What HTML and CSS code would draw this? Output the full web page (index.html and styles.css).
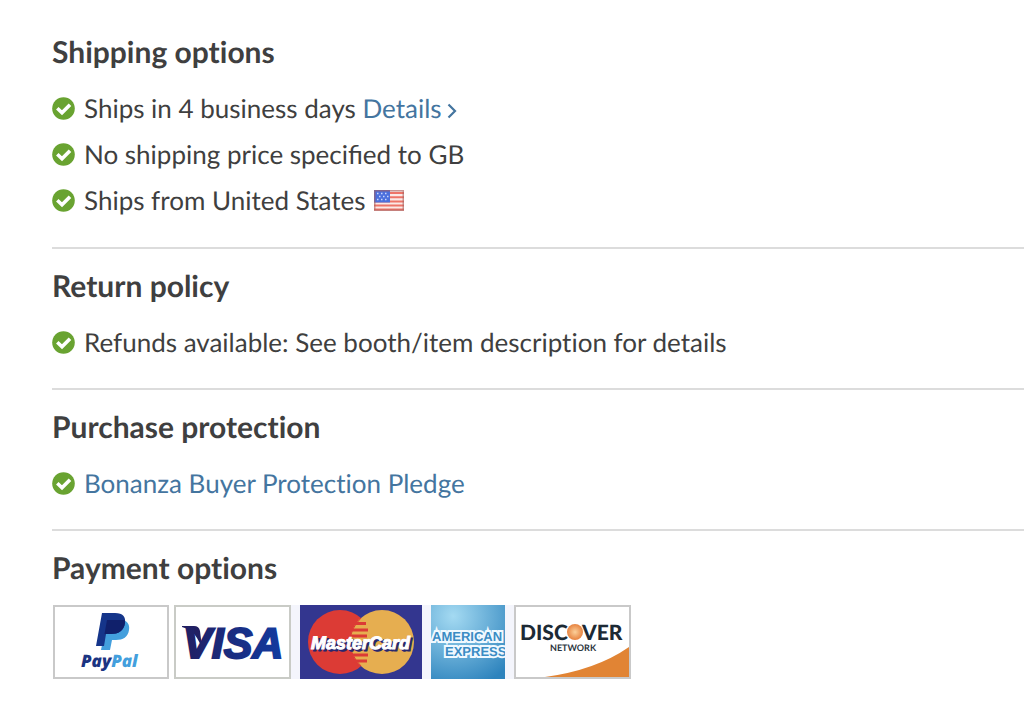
FILE: index.html
```
<!DOCTYPE html>
<html lang="en">
<head>
<meta charset="utf-8">
<title>Shipping and payment</title>
<link rel="stylesheet" href="styles.css">
</head>
<body>
<svg class="defs" width="0" height="0" aria-hidden="true">
  <symbol id="check" viewBox="0 0 23 23">
    <circle cx="11.5" cy="11.5" r="11.3" fill="#69a331"/>
    <path d="M5.3 11.300 10 15.800 18 7.700" fill="none" stroke="#fff" stroke-width="3.6"/>
  </symbol>
</svg>
<main class="policies">
  <section class="policy">
    <h2 class="title">Shipping options</h2>
    <ul class="list">
      <li class="item"><svg class="check"><use href="#check"/></svg><span>Ships in 4 business days <a class="link" href="#">Details<svg class="chevron" viewBox="0 0 10 16"><path d="M1.5 1.5 8 8 1.5 14.5" fill="none" stroke="currentColor" stroke-width="2.2"/></svg></a></span></li>
      <li class="item joined"><svg class="check"><use href="#check"/></svg><span>No shipping price specified to GB</span></li>
      <li class="item"><svg class="check"><use href="#check"/></svg><span>Ships from United States</span>
        <svg class="flag" viewBox="0 0 30 21" role="img" aria-label="United States flag">
          <rect width="30" height="21" fill="#fbe9e6"/>
          <path d="M0 3h30M0 7.2h30M0 11.4h30M0 15.6h30M0 19.4h30" stroke="#ee7468" stroke-width="2"/>
          <rect width="16" height="12.5" fill="#4b6fdc"/>
          <path d="M3 3.5h12M5 6.5h10M3 9.5h12" stroke="#c9d6fb" stroke-width="1.5" stroke-dasharray="1.5 2.5"/>
          <rect x=".75" y=".75" width="28.5" height="19.5" fill="none" stroke="#a5605f" stroke-opacity=".6" stroke-width="1.5"/>
        </svg></li>
    </ul>
  </section>
  <section class="policy">
    <h2 class="title">Return policy</h2>
    <ul class="list">
      <li class="item"><svg class="check"><use href="#check"/></svg><span>Refunds available: See booth/item description for details</span></li>
    </ul>
  </section>
  <section class="policy">
    <h2 class="title">Purchase protection</h2>
    <ul class="list">
      <li class="item"><svg class="check"><use href="#check"/></svg><a class="link" href="#">Bonanza Buyer Protection Pledge</a></li>
    </ul>
  </section>
  <section class="policy">
    <h2 class="title">Payment options</h2>
    <div class="cards">
      <svg class="card" width="116" height="74" viewBox="0 0 116 74" role="img" aria-label="PayPal">
        <rect x="1" y="1" width="114" height="72" fill="#fff" stroke="#c9c9c9" stroke-width="2"/>
        <path d="M54 15h13c7 0 10 4 9 10-1 7-6 10-13 10h-4l-2 10h-9z" fill="#439fdd"/>
        <path d="M49 8h13c8 0 11 4 10 10-1 8-7 11-14 11h-5l-2 12h-8z" fill="#15358a"/>
        <path d="M54 15h17.700q.6 1.500.3 3c-1 8-7 11-14 11h-6.500z" fill="#10206b"/>
        <text x="28" y="62" class="paypal" fill="#1b3482">Pay<tspan fill="#439fdd">Pal</tspan></text>
      </svg>
      <div class="accepted">
        <svg class="card" width="117" height="74" viewBox="0 0 117 74" role="img" aria-label="Visa">
          <defs><linearGradient id="visa-blue"><stop stop-color="#211f62"/><stop offset="1" stop-color="#123ba0"/></linearGradient></defs>
          <rect x="1" y="1" width="115" height="72" fill="#fff" stroke="#c9cbc6" stroke-width="2"/>
          <path d="M8 21h12q5 0 6 5l2 16-5-9q-4-8-15-11z" fill="#211f62"/>
          <text x="9" y="53" class="visa" fill="url(#visa-blue)" stroke="url(#visa-blue)">VISA</text>
        </svg>
        <svg class="card" width="122" height="74" viewBox="0 0 122 74" role="img" aria-label="MasterCard">
          <rect width="122" height="74" fill="#33368f"/>
          <circle cx="40" cy="37" r="32" fill="#dc3b35"/>
          <circle cx="82" cy="37" r="32" fill="#e6ae50"/>
          <path d="M55 18.500h11M52 25h16M50 31h17M50 44h17M51 50h17M53 56h14" stroke="#dc3b35" stroke-width="3"/>
          <path d="M61 13q-11 11-11 24t11 24" fill="none" stroke="#dc3b35"/>
          <text x="13" y="46" class="mastercard" fill="#26276f" stroke="#26276f">MasterCard</text>
          <text x="11" y="44" class="mastercard" fill="#fff" stroke="#fff">MasterCard</text>
        </svg>
        <svg class="card" width="74" height="74" viewBox="0 0 74 74" role="img" aria-label="American Express">
          <defs><radialGradient id="amex-blue" cx=".3" cy=".15" r="1"><stop stop-color="#a4daf2"/><stop offset="1" stop-color="#2d83bd"/></radialGradient></defs>
          <rect width="74" height="74" fill="url(#amex-blue)"/>
          <text x="1" y="36" class="amex">AMERICAN</text>
          <text x="14" y="51" class="amex">EXPRESS</text>
        </svg>
        <svg class="card" width="117" height="74" viewBox="0 0 117 74" role="img" aria-label="Discover Network">
          <defs><radialGradient id="orange-ball"><stop stop-color="#fbd09a"/><stop offset="1" stop-color="#e78340"/></radialGradient></defs>
          <rect x="1" y="1" width="115" height="72" fill="#fff" stroke="#c9c9c9" stroke-width="2"/>
          <path d="M115 42v30H31Q82 65 115 42z" fill="#e18434"/>
          <text x="6" y="35" class="discover">DISC</text>
          <circle cx="61" cy="27" r="8" fill="url(#orange-ball)"/>
          <text x="68" y="35" class="discover">VER</text>
          <text x="36" y="46" class="network">NETWORK</text>
        </svg>
      </div>
    </div>
  </section>
</main>
</body>
</html>
```

FILE: styles.css
```
body {
  margin: 0;
  background: #fff;
  color: #3f3f40;
  font-family: Lato, "Liberation Sans", sans-serif;
  font-size: 26px;
  font-variant-ligatures: none;
  text-rendering: geometricPrecision;
}
.defs {
  position: absolute;
}
.policies {
  padding: 14px 0 38px 52px;
}
.policy {
  padding: 17px 0 23px;
}
.policy + .policy {
  border-top: 2px solid #dcdcdc;
}
.policy:first-child {
  padding: 18px 0 24px;
}
.policy:last-child {
  padding-bottom: 0;
}
.title {
  margin: 0 0 13px;
  font-size: 30px;
  line-height: 40px;
  font-weight: 700;
}
.list {
  margin: 0;
  padding: 0;
  list-style: none;
}
.item {
  display: flex;
  align-items: center;
  line-height: 46px;
}
.joined {
  font-variant-ligatures: normal;
}
.check {
  flex: none;
  width: 23px;
  height: 23px;
  margin-right: 9px;
}
.link {
  color: #44759f;
  text-decoration: none;
}
.chevron {
  width: 10px;
  height: 16px;
  margin-left: 5px;
  vertical-align: -1px;
}
.flag {
  width: 30px;
  height: 21px;
  margin-left: 9px;
}
.cards {
  display: flex;
  flex-wrap: wrap;
  gap: 5px;
  margin-top: 17px;
  padding-left: 1px;
}
.accepted {
  display: flex;
  flex-wrap: wrap;
  gap: 9px;
  background: #f4f5fc;
}
.card {
  display: block;
}
.paypal {
  font: italic 800 17px "Open Sans", sans-serif;
}
.visa {
  font: italic 700 43px "Liberation Sans", sans-serif;
  stroke-width: 2;
}
.mastercard {
  font: italic 700 18px "Liberation Sans", sans-serif;
  stroke-width: 1;
}
.amex {
  font: 700 13px "Liberation Sans", sans-serif;
  fill: #3b8cc4;
  stroke: #f0f9ff;
  stroke-width: 4;
  paint-order: stroke;
}
.discover {
  font: 900 21px Lato, sans-serif;
  fill: #1c2a35;
}
.network {
  font: 700 9px Lato, sans-serif;
  fill: #2b343d;
}
```
